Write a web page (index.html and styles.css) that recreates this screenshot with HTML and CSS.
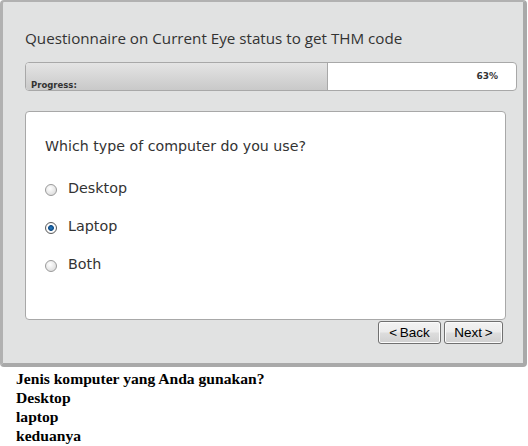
FILE: index.html
```html
<!DOCTYPE html>
<html>
<head>
<meta charset="utf-8">
<link rel="stylesheet" href="styles.css">
</head>
<body>
<div class="survey">
  <h1 class="title">Questionnaire on Current Eye status to get THM code</h1>
  <div class="progress">
    <div class="progress-fill" style="width:61.6%"><span class="progress-label">Progress:</span></div>
    <span class="progress-pct">63%</span>
  </div>
  <div class="card">
    <div class="question">Which type of computer do you use?</div>
    <label class="option"><span class="radio"></span><span>Desktop</span></label>
    <label class="option"><span class="radio checked"></span><span>Laptop</span></label>
    <label class="option"><span class="radio"></span><span>Both</span></label>
  </div>
  <div class="nav">
    <button class="btn btn-back">&lt;&#8201;Back</button>
    <button class="btn btn-next">Next&#8201;&gt;</button>
  </div>
</div>
<div class="translation">
  <div>Jenis komputer yang Anda gunakan?</div>
  <div>Desktop</div>
  <div>laptop</div>
  <div>keduanya</div>
</div>
</body>
</html>
```
FILE: styles.css
```css
html, body { margin: 0; padding: 0; background: #fff; }
.survey {
  box-sizing: border-box;
  width: 527px;
  height: 367px;
  background: #e1e2e2;
  border-top: 2px solid #b1b1b1;
  border-left: 3px solid #b1b1b1;
  border-right: 4px solid #a9a9a9;
  border-bottom: 4px solid #a9a9a9;
  border-radius: 4px;
  padding: 0 0 0 22px;
  display: flex;
  flex-direction: column;
  font-family: "Open Sans", sans-serif;
  color: #333;
}
.title {
  margin: 25px 0 0 0;
  font-size: 15.2px;
  font-weight: normal;
  line-height: 22px;
  color: #333;
}
.progress {
  margin-top: 13px;
  width: 492px;
  height: 29px;
  box-sizing: border-box;
  border: 1px solid #a8a8a8;
  border-radius: 4px;
  background: #fff;
  position: relative;
  overflow: hidden;
  display: flex;
}
.progress-fill {
  height: 100%;
  background: linear-gradient(#e4e4e4, #c9c9c9);
  border-right: 1px solid #a8a8a8;
  box-sizing: border-box;
  display: flex;
  align-items: flex-end;
}
.progress-label {
  font-family: "DejaVu Sans", Verdana, sans-serif;
  font-size: 8.5px;
  font-weight: bold;
  line-height: 10px;
  padding-left: 5px;
  color: #333;
}
.progress-pct {
  position: absolute;
  right: 18px;
  top: 8px;
  font-family: "DejaVu Sans", Verdana, sans-serif;
  font-size: 9px;
  font-weight: bold;
  line-height: 11px;
  color: #333;
}
.card {
  margin-top: 20px;
  width: 481px;
  height: 209px;
  box-sizing: border-box;
  background: #fff;
  border: 1px solid #a8a8a8;
  border-radius: 4px;
  padding: 24px 0 0 19px;
  display: flex;
  flex-direction: column;
  font-family: "DejaVu Sans", Verdana, sans-serif;
}
.question {
  font-size: 14.2px;
  line-height: 20px;
  color: #333;
  margin-bottom: 13px;
}
.option {
  display: flex;
  align-items: center;
  gap: 11px;
  height: 38px;
  font-size: 14.3px;
  color: #333;
}
.radio {
  width: 12px;
  height: 12px;
  border-radius: 50%;
  box-sizing: border-box;
  border: 1px solid #9a9a9a;
  background: radial-gradient(circle at 40% 35%, #fff, #d4d4d4);
  margin-top: 3px;
}
.radio.checked {
  background: radial-gradient(circle, #2a7fc4 0, #0c4a86 2.5px, #fff 3.3px, #e8e8e8 100%);
  border-color: #5a5a5a;
}
.nav {
  display: flex;
  justify-content: flex-end;
  gap: 3px;
  width: 478px;
  margin-top: 1px;
}
.btn {
  height: 23px;
  padding: 0;
  font-family: "Liberation Sans", Arial, sans-serif;
  font-size: 13.5px;
  color: #000;
  background: linear-gradient(#f3f3f3 0, #ececec 45%, #dcdcdc 55%, #d0d0d0 100%);
  border: 1px solid #707070;
  border-radius: 3px;
  box-shadow: inset 0 0 0 1px #fbfbfb;
}
.btn-back { width: 63px; }
.btn-next { width: 59px; }
.translation {
  padding: 2px 0 0 16px;
  font-family: "Liberation Serif", serif;
  font-weight: bold;
  font-size: 15.6px;
  line-height: 19px;
  color: #000;
}
```
